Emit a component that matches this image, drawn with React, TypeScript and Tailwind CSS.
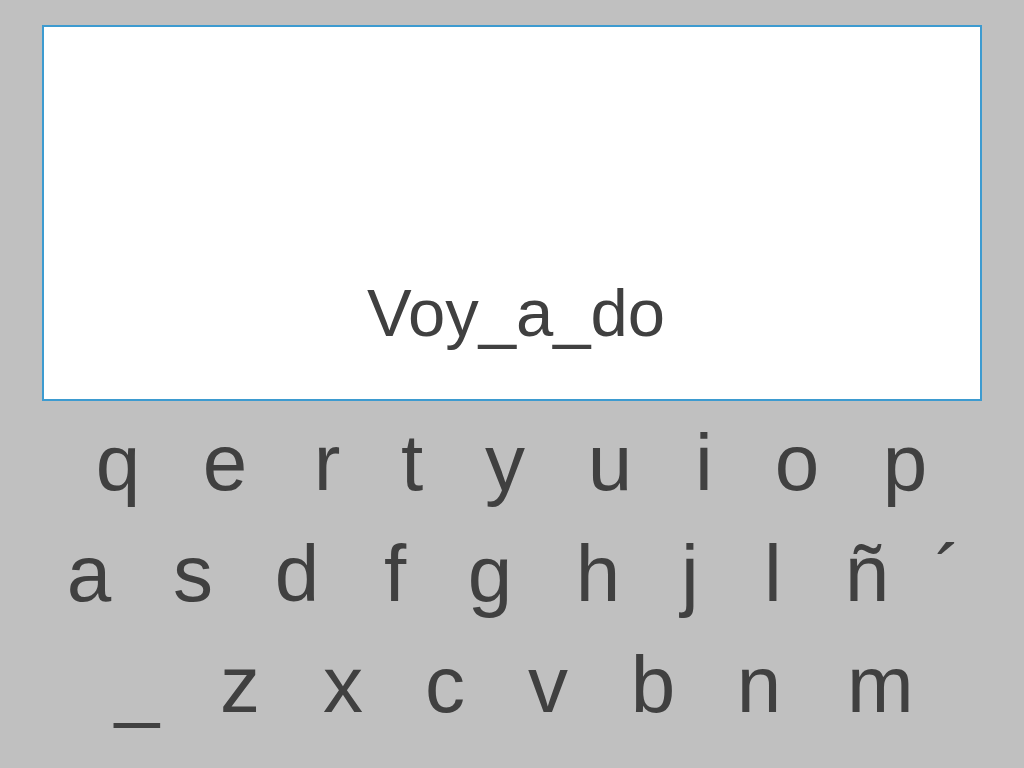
const rows: { first: string; keys: [string, string][] }[] = [
  {
    first: "pl-[88px]",
    keys: [
      ["q", ""],
      ["e", "ml-[47px]"],
      ["r", "ml-[42px]"],
      ["t", "ml-[25px]"],
      ["y", "ml-[33px]"],
      ["u", "ml-[45px]"],
      ["i", "ml-[34px]"],
      ["o", "ml-[33px]"],
      ["p", "ml-[48px]"],
    ],
  },
  {
    first: "pl-[59px]",
    keys: [
      ["a", ""],
      ["s", "ml-[44px]"],
      ["d", "ml-[44px]"],
      ["f", "ml-[38px]"],
      ["g", "ml-[35px]"],
      ["h", "ml-[48px]"],
      ["j", "ml-[32px]"],
      ["l", "ml-[23px]"],
      ["ñ", "ml-[34px]"],
      ["´", "ml-[21px]"],
    ],
  },
  {
    first: "pl-[107px]",
    keys: [
      ["_", ""],
      ["z", "ml-[43px]"],
      ["x", "ml-[43px]"],
      ["c", "ml-[42px]"],
      ["v", "ml-[43px]"],
      ["b", "ml-[45px]"],
      ["n", "ml-[46px]"],
      ["m", "ml-[58px]"],
    ],
  },
];

export default function App() {
  return (
    <div className="h-[768px] w-[1024px] overflow-hidden bg-[#c0c0c0] font-['Liberation_Sans',Arial,sans-serif] text-[#404040]">
      <div className="pt-[25px] pl-[42px]">
        <div className="h-[376px] w-[940px] border-2 border-[#3d9bd0] bg-white pt-[252px] pl-[8px] text-center text-[67px] leading-none">
          Voy_a_do
        </div>
      </div>

      <div className="mt-[6px]">
        {rows.map((row, i) => (
          <div key={i} className={`flex h-[111px] text-[80px] leading-[111px] ${row.first}`}>
            {row.keys.map(([k, cls]) => (
              <span key={k} className={`w-[60px] shrink-0 text-center ${cls}`}>
                {k}
              </span>
            ))}
          </div>
        ))}
      </div>
    </div>
  );
}
